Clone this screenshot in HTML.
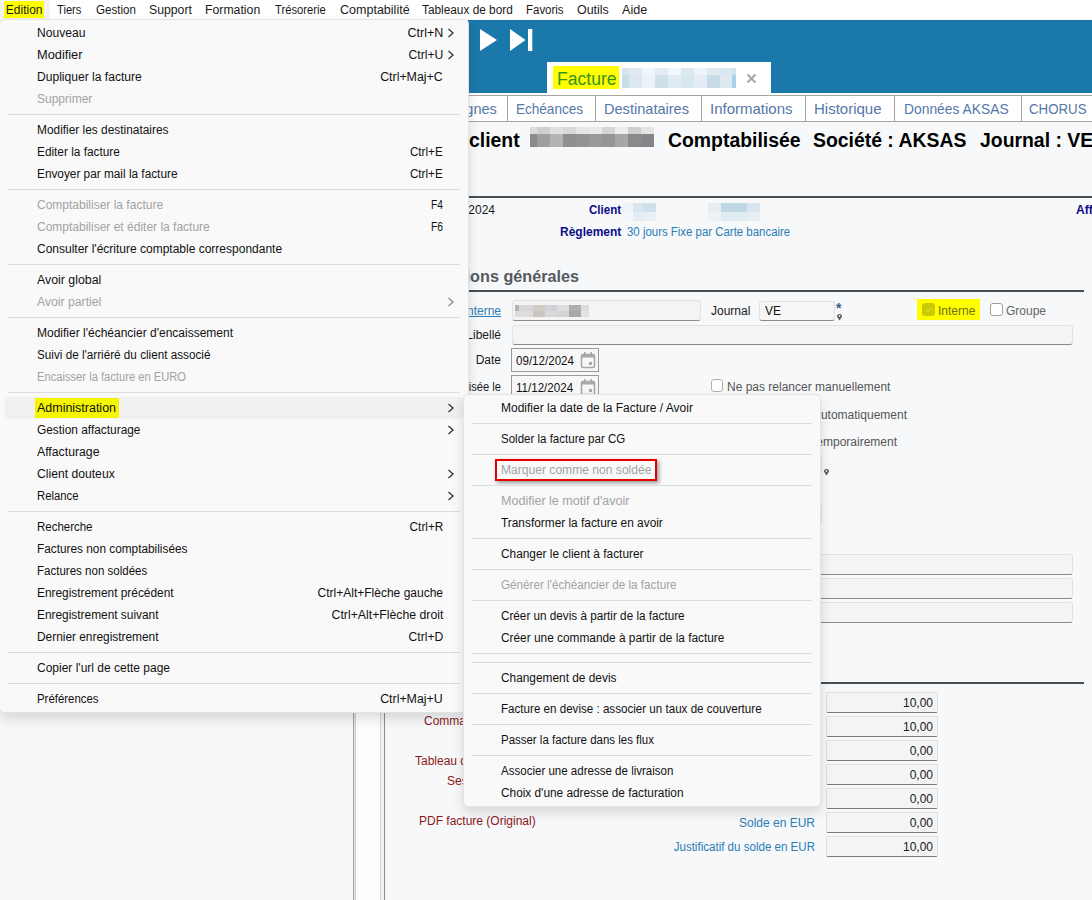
<!DOCTYPE html>
<html><head><meta charset="utf-8">
<style>
*{margin:0;padding:0;box-sizing:border-box}
html,body{width:1092px;height:900px;overflow:hidden}
body{position:relative;background:#f7f8fa;font-family:"Liberation Sans",sans-serif;font-size:12px;color:#000}
.a{position:absolute;white-space:nowrap}
/* menubar */
#mbar{position:absolute;left:0;top:0;width:1092px;height:19px;background:#fff}
#mbar span{position:absolute;top:1px;transform-origin:left;line-height:19px;font-size:12px;color:#1a1a1a}
/* header */
#blue{position:absolute;left:468px;top:20px;width:624px;height:73px;background:#1a78aa}
#tabrow{position:absolute;left:468px;top:95px;width:624px;height:27px;background:#fff;border-top:1px solid #a4a4a4;border-bottom:1px solid #a4a4a4}
#tabrow span{position:absolute;top:0;height:25px;line-height:26px;font-size:15px;color:#5577a8;white-space:nowrap}
#tabrow i{position:absolute;top:0;width:1px;height:25px;background:#a4a4a4}
#ftab{position:absolute;left:547px;top:62px;width:224px;height:33px;background:#fff}
.blk{position:absolute}
.lbl{position:absolute;white-space:nowrap;font-size:12px;line-height:16px}
.inp{position:absolute;background:#f4f4f4;border:1px solid #e2e2e2;border-bottom:1px solid #8a8a8a;border-radius:3px}
.vbox{position:absolute;left:826px;width:112px;height:21px;background:#f4f4f4;border:1px solid #e0e0e0;border-bottom:1px solid #7d7d7d;border-radius:2px;text-align:right;padding-right:4px;font-size:12px;line-height:20px;color:#1a1a1a}
/* menus */
.menu{position:absolute;background:#f9f9f9;border:1px solid #e3e3e3;border-radius:5px;box-shadow:0 6px 12px rgba(0,0,0,0.13)}
.mi{position:absolute;white-space:nowrap;transform-origin:left;font-size:12px;line-height:22px;height:22px;color:#111}
.dis{color:#a3a3a3}
.sc{position:absolute;white-space:nowrap;transform-origin:right;font-size:12px;line-height:22px;height:22px;color:#111;text-align:right}
.sep{position:absolute;height:1px;background:#dcdcdc}
.arr{position:absolute;width:6px;height:6px;border-right:1.3px solid #333;border-top:1.3px solid #333;transform:rotate(45deg)}
</style></head><body>

<div id="mbar">
  <div class="a" style="left:0;top:0;width:50px;height:19px;background:#f3f3f3;border-radius:3px"></div>
  <div class="a" style="left:4px;top:1px;width:40px;height:17px;background:#ffff00"></div>
  <span style="left:5.8px">Edition</span>
  <span style="left:57.4px;transform:scaleX(0.931)">Tiers</span>
  <span style="left:95.5px;transform:scaleX(0.965)">Gestion</span>
  <span style="left:149.1px;transform:scaleX(1.021)">Support</span>
  <span style="left:205.4px;transform:scaleX(1.022)">Formation</span>
  <span style="left:275.1px;transform:scaleX(0.937)">Trésorerie</span>
  <span style="left:339.8px;transform:scaleX(1.044)">Comptabilité</span>
  <span style="left:422.2px;transform:scaleX(0.986)">Tableaux de bord</span>
  <span style="left:526.2px;transform:scaleX(0.956)">Favoris</span>
  <span style="left:577.0px;transform:scaleX(1.037)">Outils</span>
  <span style="left:622.3px;transform:scaleX(1.049)">Aide</span>
</div>

<div id="blue"></div>
<div class="a" style="left:468px;top:93px;width:624px;height:2px;background:#fff"></div>
<div id="tabrow">
  <span style="left:-14px;transform:scaleX(0.97);transform-origin:left">Lignes</span>
  <i style="left:39px"></i>
  <span style="left:48px;transform:scaleX(0.903);transform-origin:left">Echéances</span>
  <i style="left:127px"></i>
  <span style="left:136px;transform:scaleX(0.971);transform-origin:left">Destinataires</span>
  <i style="left:233px"></i>
  <span style="left:242px">Informations</span>
  <i style="left:337px"></i>
  <span style="left:346px">Historique</span>
  <i style="left:426px"></i>
  <span style="left:436px;transform:scaleX(0.923);transform-origin:left">Données AKSAS</span>
  <i style="left:553px"></i>
  <span style="left:561px;transform:scaleX(0.885);transform-origin:left">CHORUS</span>
</div>


<!-- Facture tab -->
<div id="ftab"></div>
<div class="a" style="left:553px;top:66px;width:66px;height:23px;background:#ffff00"></div>
<div class="a" style="left:557px;top:68px;font-size:17.6px;line-height:23px;color:#359420">Facture</div>
<div class="blk" style="left:622px;top:68px;width:114px;height:7px;background:linear-gradient(90deg,#d6e5ef 0 7px,#dfe9f1 7px 20px,#f1f6fa 20px 33px,#e4ecf3 33px 46px,#f2f7fb 46px 59px,#dde9f0 59px 72px,#eef4f8 72px 85px,#e2eaf1 85px 98px,#d9e7f0 98px 110px,#cfe2ef 110px)"></div>
<div class="blk" style="left:622px;top:75px;width:114px;height:13px;background:linear-gradient(90deg,#cadeea 0 7px,#dce8f0 7px 20px,#ecf3f7 20px 33px,#cfe0ea 33px 46px,#e0ebf2 46px 59px,#d8e6ef 59px 72px,#e3edf3 72px 85px,#c8dce7 85px 98px,#dfeaf0 98px 110px,#a9d3ea 110px)"></div>
<svg class="a" style="left:746px;top:73px" width="11" height="11" viewBox="0 0 11 11"><path d="M1.5 1.5L9.5 9.5M9.5 1.5L1.5 9.5" stroke="#a9a9a9" stroke-width="2.2"/></svg>
<!-- play icons -->
<svg class="a" style="left:478px;top:27px" width="60" height="26" viewBox="0 0 60 26"><path d="M2 2L19 13L2 24Z" fill="#fff"/><path d="M32 2L47.5 13L32 24Z" fill="#fff"/><rect x="50" y="2" width="4.3" height="22" fill="#fff"/></svg>

<!-- Title -->
<div class="a" style="left:469px;top:129px;font-size:19.4px;line-height:22px;font-weight:bold;color:#000">client</div>
<div class="blk" style="left:530px;top:127px;width:124px;height:7px;background:linear-gradient(90deg,#dcdcdc 0 7px,#cfcfcf 7px 20px,#e0e0e0 20px 33px,#d8d8d8 33px 46px,#e6e6e6 46px 59px,#eaeaea 59px 72px,#d5d5d8 72px 85px,#efeeee 85px 98px,#cfcfcf 98px 111px,#e2e3e5 111px)"></div>
<div class="blk" style="left:530px;top:134px;width:124px;height:13px;background:linear-gradient(90deg,#8d8a88 0 7px,#9f9f9f 7px 20px,#b4b4b4 20px 33px,#8f8f8f 33px 46px,#939391 46px 59px,#9a999b 59px 72px,#959595 72px 85px,#a7a7a8 85px 98px,#8a8a88 98px 111px,#858589 111px)"></div>
<div class="a" style="left:668px;top:129px;font-size:19.4px;line-height:22px;font-weight:bold;color:#000">Comptabilisée</div>
<div class="a" style="left:813px;top:129px;font-size:19.4px;line-height:22px;font-weight:bold;color:#000">Société : AKSAS</div>
<div class="a" style="left:980px;top:129px;font-size:19.4px;line-height:22px;font-weight:bold;color:#000">Journal : VE</div>
<div class="blk" style="left:468px;top:196px;width:624px;height:2px;background:#454f59"></div>

<!-- client block -->
<div class="lbl" style="left:395px;top:202px;width:100px;text-align:right;color:#1a1a1a">09/12/2024</div>
<div class="lbl" style="left:589px;top:202px;font-weight:bold;color:#0c0c88;transform:scaleX(0.96);transform-origin:left">Client</div>
<div class="blk" style="left:623px;top:203px;width:33px;height:9px;background:linear-gradient(90deg,#eef3f8 0 10px,#d9e6ef 10px 20px,#cfe0eb 20px)"></div>
<div class="blk" style="left:623px;top:212px;width:33px;height:9px;background:linear-gradient(90deg,#f3f6fa 0 10px,#e5edf4 10px 20px,#e9f0f5 20px)"></div>
<div class="blk" style="left:708px;top:203px;width:52px;height:9px;background:linear-gradient(90deg,#e6eef4 0 13px,#c0d7e6 13px 39px,#d9e6ef 39px)"></div>
<div class="blk" style="left:708px;top:212px;width:52px;height:9px;background:linear-gradient(90deg,#edf2f7 0 13px,#e1ebf2 13px 39px,#e6eef4 39px)"></div>
<div class="lbl" style="left:1076px;top:202px;font-weight:bold;color:#0c0c88">Aff</div>
<div class="lbl" style="left:560px;top:224px;font-weight:bold;color:#0c0c88">Règlement</div>
<div class="lbl" style="left:627px;top:224px;color:#2a7db5;transform:scaleX(0.952);transform-origin:left">30 jours Fixe par Carte bancaire</div>

<div class="a" style="left:379px;top:266px;width:200px;text-align:right;font-size:16.2px;line-height:20px;font-weight:bold;color:#555a60">Informations générales</div>
<div class="blk" style="left:468px;top:290px;width:616px;height:2px;background:#454f59"></div>


<!-- form -->
<div class="lbl" style="left:400px;top:303px;width:101px;text-align:right;color:#2a7db5;text-decoration:underline">Code interne</div>
<div class="inp" style="left:512px;top:300px;width:189px;height:21px"></div>
<div class="blk" style="left:515px;top:305px;width:74px;height:6px;background:linear-gradient(90deg,#b8b0ae 0 4px,#d8d8dc 4px 18px,#d2ccc8 18px 30px,#d0d2d8 30px 42px,#e0dedc 42px 54px,#aeaeae 54px 66px,#dcdcdc 66px)"></div>
<div class="blk" style="left:515px;top:311px;width:74px;height:6px;background:linear-gradient(90deg,#dcdcdc 0 6px,#e0dcda 6px 18px,#cac6c4 18px 30px,#d6d8dc 30px 42px,#d4d4d4 42px 54px,#a8a8a8 54px 66px,#e2e0e2 66px)"></div>
<div class="lbl" style="left:711px;top:303px;color:#1a1a1a">Journal</div>
<div class="inp" style="left:759px;top:301px;width:76px;height:20px;background:#f6f6f6"></div>
<div class="lbl" style="left:765px;top:303px;color:#111">VE</div>
<div class="a" style="left:836px;top:301px;font-size:14px;line-height:14px;color:#3a5a8a;font-weight:bold">*</div>
<svg class="a" style="left:836px;top:313px" width="7" height="8" viewBox="0 0 7 8"><path d="M3.5 7.5L1 3.5A2.5 2.5 0 1 1 6 3.5Z" fill="#555"/><circle cx="3.5" cy="3" r="1" fill="#eee"/></svg>
<div class="blk" style="left:917px;top:299px;width:63px;height:21px;background:#ffff00"></div>
<div class="blk" style="left:922px;top:303px;width:13px;height:13px;background:#caca00;border-radius:3px"></div>
<svg class="a" style="left:922px;top:303px" width="13" height="13" viewBox="0 0 13 13"><path d="M3.5 6.8L5.6 8.8L9.5 4.5" stroke="#e8e84a" stroke-width="1" fill="none"/></svg>
<div class="lbl" style="left:938px;top:303px;color:#6e6e10">Interne</div>
<div class="blk" style="left:990px;top:303px;width:13px;height:13px;background:#fff;border:1px solid #a0a0a0;border-radius:3px"></div>
<div class="lbl" style="left:1006px;top:303px;color:#666">Groupe</div>

<div class="lbl" style="left:400px;top:327px;width:101px;text-align:right;color:#1a1a1a">Libellé</div>
<div class="inp" style="left:512px;top:325px;width:561px;height:20px"></div>
<div class="lbl" style="left:400px;top:352px;width:101px;text-align:right;color:#1a1a1a">Date</div>
<div class="blk" style="left:511px;top:348px;width:88px;height:24px;background:#f7f7f7;border:1px solid #9a9a9a"></div>
<div class="lbl" style="left:516px;top:353px;color:#111;transform:scaleX(0.965);transform-origin:left">09/12/2024</div>
<svg class="a" style="left:580px;top:351px" width="16" height="18" viewBox="0 0 16 18"><rect x="1.5" y="3.5" width="13" height="13" rx="1.5" fill="none" stroke="#a8a8a8" stroke-width="1.6"/><rect x="1.5" y="3.5" width="13" height="3" fill="#a8a8a8"/><rect x="4" y="1" width="1.6" height="4" fill="#a8a8a8"/><rect x="10.4" y="1" width="1.6" height="4" fill="#a8a8a8"/><rect x="9" y="11" width="3" height="3" fill="#a8a8a8"/></svg>
<div class="lbl" style="left:400px;top:379px;width:101px;text-align:right;color:#1a1a1a;transform:scaleX(0.93);transform-origin:right">Comptabilisée le</div>
<div class="blk" style="left:511px;top:375px;width:88px;height:24px;background:#f7f7f7;border:1px solid #9a9a9a"></div>
<div class="lbl" style="left:516px;top:380px;color:#111;transform:scaleX(0.965);transform-origin:left">11/12/2024</div>
<svg class="a" style="left:580px;top:378px" width="16" height="18" viewBox="0 0 16 18"><rect x="1.5" y="3.5" width="13" height="13" rx="1.5" fill="none" stroke="#a8a8a8" stroke-width="1.6"/><rect x="1.5" y="3.5" width="13" height="3" fill="#a8a8a8"/><rect x="4" y="1" width="1.6" height="4" fill="#a8a8a8"/><rect x="10.4" y="1" width="1.6" height="4" fill="#a8a8a8"/><rect x="9" y="11" width="3" height="3" fill="#a8a8a8"/></svg>
<div class="blk" style="left:711px;top:379px;width:12px;height:13px;background:#fff;border:1px solid #b0b0b0;border-radius:3px"></div>
<div class="lbl" style="left:727px;top:379px;color:#555">Ne pas relancer manuellement</div>
<div class="blk" style="left:711px;top:406px;width:12px;height:13px;background:#fff;border:1px solid #b0b0b0;border-radius:3px"></div>
<div class="lbl" style="left:727px;top:407px;width:180px;text-align:right;color:#555">Relancer automatiquement</div>
<div class="lbl" style="left:727px;top:434px;width:170px;text-align:right;color:#555">Bloquer temporairement</div>
<svg class="a" style="left:823px;top:468px" width="7" height="8" viewBox="0 0 7 8"><path d="M3.5 7.5L1 3.5A2.5 2.5 0 1 1 6 3.5Z" fill="#555"/><circle cx="3.5" cy="3" r="1" fill="#eee"/></svg>
<div class="inp" style="left:700px;top:456px;width:122px;height:17px;border-color:#e2e2e2"></div>
<div class="inp" style="left:700px;top:504px;width:122px;height:21px;border-color:#e2e2e2"></div>
<div class="inp" style="left:700px;top:554px;width:373px;height:21px"></div>
<div class="inp" style="left:700px;top:578px;width:373px;height:21px"></div>
<div class="inp" style="left:700px;top:602px;width:373px;height:21px"></div>
<div class="blk" style="left:468px;top:682px;width:616px;height:2px;background:#454f59"></div>

<!-- lower-left columns -->
<div class="blk" style="left:353px;top:690px;width:32px;height:210px;background:linear-gradient(90deg,#a0a2a8 0 1px,#e4e4e4 1px 2px,#cfcfcf 2px 3px,#fdfdfd 3px 27px,#d2d2d2 27px 28px,#f2f2f2 28px 31px,#8c8c8c 31px 32px)"></div>
<div class="lbl" style="left:424px;top:713px;color:#8b1a1a">Commande</div>
<div class="lbl" style="left:415px;top:753px;color:#8b1a1a">Tableau de bord</div>
<div class="lbl" style="left:447px;top:773px;color:#8b1a1a">Sessions</div>
<div class="lbl" style="left:419px;top:813px;color:#8b1a1a">PDF facture (Original)</div>
<div class="lbl" style="left:600px;top:815px;width:215px;text-align:right;color:#2a7db5">Solde en EUR</div>
<div class="lbl" style="left:600px;top:839px;width:215px;text-align:right;color:#2a7db5;transform:scaleX(0.963);transform-origin:right">Justificatif du solde en EUR</div>
<div class="vbox" style="top:692px">10,00</div>
<div class="vbox" style="top:716px">10,00</div>
<div class="vbox" style="top:740px">0,00</div>
<div class="vbox" style="top:764px">0,00</div>
<div class="vbox" style="top:788px">0,00</div>
<div class="vbox" style="top:812px">0,00</div>
<div class="vbox" style="top:836px">10,00</div>

<!-- main menu -->
<div class="menu" style="left:-1px;top:19px;width:470px;height:694px"></div>
<div class="mi" style="left:37px;top:22px;transform:scaleX(1.010)">Nouveau</div>
<div class="sc" style="right:649px;top:22px;transform:scaleX(1.041)">Ctrl+N</div>
<svg class="a" style="left:447px;top:28px" width="8" height="10" viewBox="0 0 8 10"><path d="M1.5 1L6 5L1.5 9" stroke="#333" stroke-width="1.3" fill="none"/></svg>
<div class="mi" style="left:37px;top:44px;transform:scaleX(1.066)">Modifier</div>
<div class="sc" style="right:649px;top:44px;transform:scaleX(1.012)">Ctrl+U</div>
<svg class="a" style="left:447px;top:50px" width="8" height="10" viewBox="0 0 8 10"><path d="M1.5 1L6 5L1.5 9" stroke="#333" stroke-width="1.3" fill="none"/></svg>
<div class="mi" style="left:37px;top:66px;transform:scaleX(1.007)">Dupliquer la facture</div>
<div class="sc" style="right:649px;top:66px;transform:scaleX(1.030)">Ctrl+Maj+C</div>
<div class="mi dis" style="left:37px;top:88px">Supprimer</div>
<div class="sep" style="left:8px;top:114px;width:452px"></div>
<div class="mi" style="left:37px;top:119px;transform:scaleX(0.991)">Modifier les destinataires</div>
<div class="mi" style="left:37px;top:141px;transform:scaleX(0.985)">Editer la facture</div>
<div class="sc" style="right:649px;top:141px;transform:scaleX(0.973)">Ctrl+E</div>
<div class="mi" style="left:37px;top:163px;transform:scaleX(0.984)">Envoyer par mail la facture</div>
<div class="sc" style="right:649px;top:163px;transform:scaleX(0.973)">Ctrl+E</div>
<div class="sep" style="left:8px;top:189px;width:452px"></div>
<div class="mi dis" style="left:37px;top:194px">Comptabiliser la facture</div>
<div class="sc dis" style="right:649px;top:194px;transform:scaleX(0.857)">F4</div>
<div class="mi dis" style="left:37px;top:216px">Comptabiliser et éditer la facture</div>
<div class="sc dis" style="right:649px;top:216px;transform:scaleX(0.857)">F6</div>
<div class="mi" style="left:37px;top:238px">Consulter l'écriture comptable correspondante</div>
<div class="sep" style="left:8px;top:264px;width:452px"></div>
<div class="mi" style="left:37px;top:269px;transform:scaleX(1.028)">Avoir global</div>
<div class="mi dis" style="left:37px;top:291px;transform:scaleX(1.018)">Avoir partiel</div>
<svg class="a" style="left:447px;top:297px" width="8" height="10" viewBox="0 0 8 10"><path d="M1.5 1L6 5L1.5 9" stroke="#888" stroke-width="1.3" fill="none"/></svg>
<div class="sep" style="left:8px;top:317px;width:452px"></div>
<div class="mi" style="left:37px;top:322px">Modifier l'échéancier d'encaissement</div>
<div class="mi" style="left:37px;top:344px;transform:scaleX(0.976)">Suivi de l'arriéré du client associé</div>
<div class="mi dis" style="left:37px;top:366px;transform:scaleX(0.931)">Encaisser la facture en EURO</div>
<div class="sep" style="left:8px;top:392px;width:452px"></div>
<div class="blk" style="left:5px;top:397px;width:458px;height:22px;background:#f0f0f0;border-radius:4px"></div>
<div class="blk" style="left:35px;top:398px;width:84px;height:20px;background:#f5f500"></div>
<div class="mi" style="left:37px;top:397px;transform:scaleX(1.039)">Administration</div>
<svg class="a" style="left:447px;top:403px" width="8" height="10" viewBox="0 0 8 10"><path d="M1.5 1L6 5L1.5 9" stroke="#333" stroke-width="1.3" fill="none"/></svg>
<div class="mi" style="left:37px;top:419px;transform:scaleX(0.990)">Gestion affacturage</div>
<svg class="a" style="left:447px;top:425px" width="8" height="10" viewBox="0 0 8 10"><path d="M1.5 1L6 5L1.5 9" stroke="#333" stroke-width="1.3" fill="none"/></svg>
<div class="mi" style="left:37px;top:441px;transform:scaleX(1.022)">Affacturage</div>
<div class="mi" style="left:37px;top:463px;transform:scaleX(1.013)">Client douteux</div>
<svg class="a" style="left:447px;top:469px" width="8" height="10" viewBox="0 0 8 10"><path d="M1.5 1L6 5L1.5 9" stroke="#333" stroke-width="1.3" fill="none"/></svg>
<div class="mi" style="left:37px;top:485px;transform:scaleX(0.943)">Relance</div>
<svg class="a" style="left:447px;top:491px" width="8" height="10" viewBox="0 0 8 10"><path d="M1.5 1L6 5L1.5 9" stroke="#333" stroke-width="1.3" fill="none"/></svg>
<div class="sep" style="left:8px;top:511px;width:452px"></div>
<div class="mi" style="left:37px;top:516px;transform:scaleX(0.956)">Recherche</div>
<div class="sc" style="right:649px;top:516px;transform:scaleX(0.983)">Ctrl+R</div>
<div class="mi" style="left:37px;top:538px;transform:scaleX(0.985)">Factures non comptabilisées</div>
<div class="mi" style="left:37px;top:560px;transform:scaleX(0.961)">Factures non soldées</div>
<div class="mi" style="left:37px;top:582px;transform:scaleX(0.989)">Enregistrement précédent</div>
<div class="sc" style="right:649px;top:582px">Ctrl+Alt+Flèche gauche</div>
<div class="mi" style="left:37px;top:604px;transform:scaleX(0.990)">Enregistrement suivant</div>
<div class="sc" style="right:649px;top:604px;transform:scaleX(1.022)">Ctrl+Alt+Flèche droit</div>
<div class="mi" style="left:37px;top:626px;transform:scaleX(0.990)">Dernier enregistrement</div>
<div class="sc" style="right:649px;top:626px;transform:scaleX(1.012)">Ctrl+D</div>
<div class="sep" style="left:8px;top:652px;width:452px"></div>
<div class="mi" style="left:37px;top:657px">Copier l'url de cette page</div>
<div class="sep" style="left:8px;top:683px;width:452px"></div>
<div class="mi" style="left:37px;top:688px;transform:scaleX(0.951)">Préférences</div>
<div class="sc" style="right:649px;top:688px;transform:scaleX(1.030)">Ctrl+Maj+U</div>
<!-- submenu -->
<div class="menu" style="left:463px;top:394px;width:358px;height:413px"></div>
<div class="mi" style="left:501px;top:397px">Modifier la date de la Facture / Avoir</div>
<div class="sep" style="left:472px;top:423px;width:340px"></div>
<div class="mi" style="left:501px;top:428px;transform:scaleX(0.960)">Solder la facture par CG</div>
<div class="sep" style="left:472px;top:454px;width:340px"></div>
<div class="blk" style="left:495px;top:459px;width:162px;height:22px;border:2px solid #e60000;box-shadow:2px 2px 4px rgba(0,0,0,0.4)"></div>
<div class="mi dis" style="left:501px;top:459px;transform:scaleX(1.007)">Marquer comme non soldée</div>
<div class="sep" style="left:472px;top:485px;width:340px"></div>
<div class="mi dis" style="left:501px;top:490px;transform:scaleX(1.045)">Modifier le motif d'avoir</div>
<div class="mi" style="left:501px;top:512px;transform:scaleX(0.989)">Transformer la facture en avoir</div>
<div class="sep" style="left:472px;top:538px;width:340px"></div>
<div class="mi" style="left:501px;top:543px;transform:scaleX(0.989)">Changer le client à facturer</div>
<div class="sep" style="left:472px;top:569px;width:340px"></div>
<div class="mi dis" style="left:501px;top:574px;transform:scaleX(0.973)">Générer l'échéancier de la facture</div>
<div class="sep" style="left:472px;top:600px;width:340px"></div>
<div class="mi" style="left:501px;top:605px;transform:scaleX(0.976)">Créer un devis à partir de la facture</div>
<div class="mi" style="left:501px;top:627px;transform:scaleX(0.988)">Créer une commande à partir de la facture</div>
<div class="sep" style="left:472px;top:653px;width:340px"></div>
<div class="sep" style="left:472px;top:662px;width:340px"></div>
<div class="mi" style="left:501px;top:667px;transform:scaleX(0.989)">Changement de devis</div>
<div class="sep" style="left:472px;top:693px;width:340px"></div>
<div class="mi" style="left:501px;top:698px;transform:scaleX(0.967)">Facture en devise : associer un taux de couverture</div>
<div class="sep" style="left:472px;top:724px;width:340px"></div>
<div class="mi" style="left:501px;top:729px;transform:scaleX(0.955)">Passer la facture dans les flux</div>
<div class="sep" style="left:472px;top:755px;width:340px"></div>
<div class="mi" style="left:501px;top:760px;transform:scaleX(0.961)">Associer une adresse de livraison</div>
<div class="mi" style="left:501px;top:782px;transform:scaleX(0.986)">Choix d'une adresse de facturation</div>
</body></html>
